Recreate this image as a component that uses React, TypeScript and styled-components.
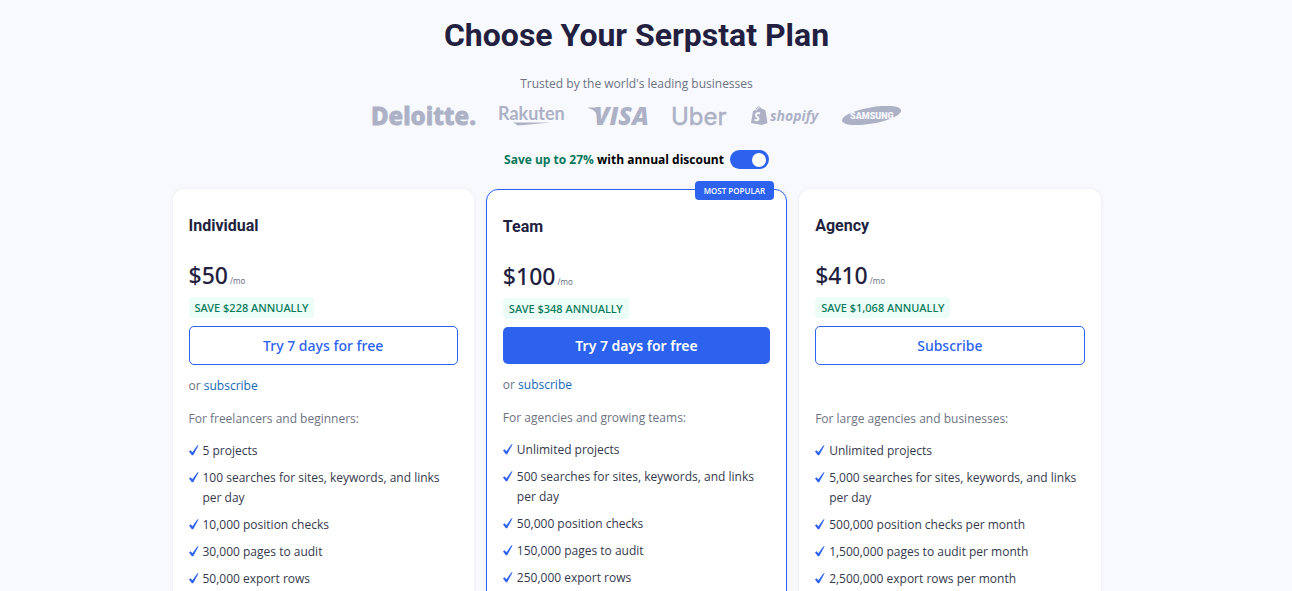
import React, { useState } from "react";
import styled, { createGlobalStyle, css } from "styled-components";

const GlobalStyle = createGlobalStyle`
  *, *::before, *::after { box-sizing: border-box; }
  body {
    margin: 0;
    background: #f8f9fd;
    color: #34394d;
    font-family: "Open Sans", "Noto Sans", sans-serif;
    font-size: 12px;
    line-height: 20px;
  }
`;

const Page = styled.main`
  display: flex;
  flex-direction: column;
  align-items: center;
  padding: 15px 35px 0 16px;
  min-height: 100vh;
  overflow: hidden;
`;

const Title = styled.h1`
  margin: 0;
  color: #231f40;
  font: 700 32px/40px Roboto, sans-serif;
  text-align: center;
`;

const Trusted = styled.p`
  margin: 19px 0 0;
  color: #6d7383;
`;

const Logos = styled.div`
  display: flex;
  flex-wrap: wrap;
  justify-content: center;
  gap: 23px;
  margin-top: 9px;
  color: #adb1c6;
`;

const Logo = styled.svg`
  display: block;
  height: 26px;
  overflow: visible;
  fill: currentColor;
`;

const Discount = styled.label`
  display: flex;
  align-items: flex-start;
  gap: 6px;
  margin-top: 21px;
  color: #000;
  font-weight: 700;
  cursor: pointer;
`;

const Green = styled.span`
  color: #08785a;
`;

const Toggle = styled.input`
  appearance: none;
  display: flex;
  align-items: center;
  width: 39px;
  height: 19px;
  margin: 0;
  padding: 0 3px;
  border-radius: 10px;
  background: #b5b9c9;
  cursor: pointer;

  &::before {
    content: "";
    width: 14px;
    height: 14px;
    border-radius: 50%;
    background: #fff;
  }
  &:checked {
    justify-content: flex-end;
    background: #2c62ee;
  }
`;

const Plans = styled.div`
  display: grid;
  grid-template-columns: repeat(3, minmax(0, 1fr));
  gap: 12px;
  width: 100%;
  max-width: 928px;
  margin-top: 19px;
`;

const Card = styled.section<{ $featured?: boolean }>`
  position: relative;
  padding: 25px 16px;
  border-radius: 12px;
  background: #fff;
  box-shadow: 0 0 4px rgba(35, 31, 64, 0.06);
  ${(p) => p.$featured && css`border: 1px solid #2c62ee;`}
`;

const Popular = styled.span`
  position: absolute;
  top: -9px;
  right: 12px;
  padding: 0 9px;
  border-radius: 4px;
  background: #2c62ee;
  color: #fff;
  font-size: 8px;
  font-weight: 600;
  line-height: 19px;
`;

const PlanName = styled.h2`
  margin: 0;
  color: #231f40;
  font: 700 16px/24px Roboto, sans-serif;
`;

const Price = styled.p`
  display: flex;
  align-items: baseline;
  gap: 2px;
  margin: 22px 0 0;
  color: #231f40;
  font-family: "Noto Sans", sans-serif;
  font-size: 23px;
  font-weight: 500;
  line-height: 30px;
`;

const Period = styled.span`
  color: #6d7383;
  font-size: 8px;
  font-weight: 400;
  line-height: 8px;
`;

const Saving = styled.p`
  width: fit-content;
  margin: 7px 0 8px;
  padding: 0 6px;
  border-radius: 4px;
  background: #ebfdf6;
  color: #08785a;
  font: 500 11px/21px "Noto Sans", sans-serif;
`;

const Action = styled.button<{ $filled?: boolean }>`
  display: block;
  width: 100%;
  padding: 8px;
  border: ${(p) => (p.$filled ? "0" : "1px solid #2c62ee")};
  border-radius: 5px;
  background: ${(p) => (p.$filled ? "#2c62ee" : "#fff")};
  color: ${(p) => (p.$filled ? "#fff" : "#2c62ee")};
  font: ${(p) => (p.$filled ? "600" : "500")} 14px/21px "Noto Sans", sans-serif;
  cursor: pointer;
`;

const Alternative = styled.p`
  min-height: 20px;
  margin: 11px 0 0;
  color: #6d7383;
`;

const TextLink = styled.a`
  color: #1469b8;
  text-decoration: none;
`;

const Audience = styled.p`
  margin: 13px 0 12px;
  color: #6d7383;
`;

const Features = styled.ul`
  display: flex;
  flex-direction: column;
  gap: 7px;
  margin: 0;
  padding: 0;
  list-style: none;
`;

const Feature = styled.li`
  display: flex;
  gap: 4px;
`;

const Tick = styled.svg`
  flex: none;
  width: 10px;
  height: 20px;
  fill: #2c62ee;
`;

type Plan = {
  name: string;
  price: string;
  saving: string;
  action: string;
  trial?: boolean;
  featured?: boolean;
  audience: string;
  features: string[];
};

const plans: Plan[] = [
  {
    name: "Individual",
    price: "$50",
    saving: "SAVE $228 ANNUALLY",
    action: "Try 7 days for free",
    trial: true,
    audience: "For freelancers and beginners:",
    features: [
      "5 projects",
      "100 searches for sites, keywords, and links per day",
      "10,000 position checks",
      "30,000 pages to audit",
      "50,000 export rows",
    ],
  },
  {
    name: "Team",
    price: "$100",
    saving: "SAVE $348 ANNUALLY",
    action: "Try 7 days for free",
    trial: true,
    featured: true,
    audience: "For agencies and growing teams:",
    features: [
      "Unlimited projects",
      "500 searches for sites, keywords, and links per day",
      "50,000 position checks",
      "150,000 pages to audit",
      "250,000 export rows",
    ],
  },
  {
    name: "Agency",
    price: "$410",
    saving: "SAVE $1,068 ANNUALLY",
    action: "Subscribe",
    audience: "For large agencies and businesses:",
    features: [
      "Unlimited projects",
      "5,000 searches for sites, keywords, and links per day",
      "500,000 position checks per month",
      "1,500,000 pages to audit per month",
      "2,500,000 export rows per month",
    ],
  },
];

function BrandLogos() {
  return (
    <Logos>
      <Logo width="105" viewBox="0 0 105 26" role="img" aria-label="Deloitte">
        <text x="-1" y="22" fontFamily="Noto Sans" fontWeight="800" fontSize="24" stroke="currentColor" strokeWidth="0.8">Deloitte.</text>
      </Logo>
      <Logo width="65" viewBox="0 0 65 26" role="img" aria-label="Rakuten">
        <text x="-2" y="17" fontFamily="Lato" fontWeight="700" fontSize="18">Rakuten</text>
        <path d="M13 19.500H51L18 22.500Z" />
      </Logo>
      <Logo width="61" viewBox="0 0 61 26" role="img" aria-label="Visa">
        <path d="M0 4.500H9L13 14L11 16C9 10 6 6.500 0 5Z" />
        <text x="6" y="22" fontFamily="Open Sans" fontWeight="800" fontStyle="italic" fontSize="25">VISA</text>
      </Logo>
      <Logo width="56" viewBox="0 0 56 26" role="img" aria-label="Uber">
        <text x="-1" y="22" fontFamily="Inter" fontWeight="400" fontSize="24" stroke="currentColor" strokeWidth="0.5">Uber</text>
      </Logo>
      <Logo width="68" viewBox="0 0 68 26" role="img" aria-label="Shopify">
        <path d="M2 8L4.500 7C5 5 6.500 3.500 8 3.500C9 3.500 9.500 4 10 5.500L12 6L14.500 7.500L16.500 20L11 22L0 20Z" />
        <path d="M5.500 7.500C6 5.500 7 4.500 8.500 5" fill="none" stroke="#f8f9fd" />
        <path d="M9 10.500C7 9.500 4.500 10.500 5 12.500C5.500 14 7.500 14 7.500 16C7.500 17.500 5 17.500 3.500 16.500" fill="none" stroke="#f8f9fd" strokeWidth="2" />
        <text x="19" y="18" fontFamily="Open Sans" fontWeight="700" fontStyle="italic" fontSize="14">shopify</text>
      </Logo>
      <Logo width="60" viewBox="0 0 60 26" role="img" aria-label="Samsung">
        <ellipse cx="29.500" cy="12.500" rx="30" ry="8.200" transform="rotate(-10 29.500 12.500)" />
        <text x="8" y="16" fill="#f8f9fd" fontFamily="Roboto" fontWeight="900" fontSize="9">SAMSUNG</text>
      </Logo>
    </Logos>
  );
}

function PlanCard({ plan }: { plan: Plan }) {
  return (
    <Card $featured={plan.featured}>
      {plan.featured && <Popular>MOST POPULAR</Popular>}
      <PlanName>{plan.name}</PlanName>
      <Price>
        {plan.price}
        <Period>/mo</Period>
      </Price>
      <Saving>{plan.saving}</Saving>
      <Action type="button" $filled={plan.featured}>{plan.action}</Action>
      <Alternative>
        {plan.trial && <>or <TextLink href="#subscribe">subscribe</TextLink></>}
      </Alternative>
      <Audience>{plan.audience}</Audience>
      <Features>
        {plan.features.map((text) => (
          <Feature key={text}>
            <Tick viewBox="0 1 10 20" aria-hidden="true">
              <path d="M0 11.500L1.500 10.300L3.400 12.300L8.300 5.600L9.600 5.200L4.200 15.200H2.900Z" />
            </Tick>
            <span>{text}</span>
          </Feature>
        ))}
      </Features>
    </Card>
  );
}

export default function App() {
  const [annual, setAnnual] = useState(true);
  return (
    <>
      <GlobalStyle />
      <Page>
        <Title>Choose Your Serpstat Plan</Title>
        <Trusted>Trusted by the world's leading businesses</Trusted>
        <BrandLogos />
        <Discount>
          <span><Green>Save up to 27%</Green> with annual discount</span>
          <Toggle type="checkbox" checked={annual} onChange={(e) => setAnnual(e.target.checked)} />
        </Discount>
        <Plans>
          {plans.map((plan) => <PlanCard key={plan.name} plan={plan} />)}
        </Plans>
      </Page>
    </>
  );
}
